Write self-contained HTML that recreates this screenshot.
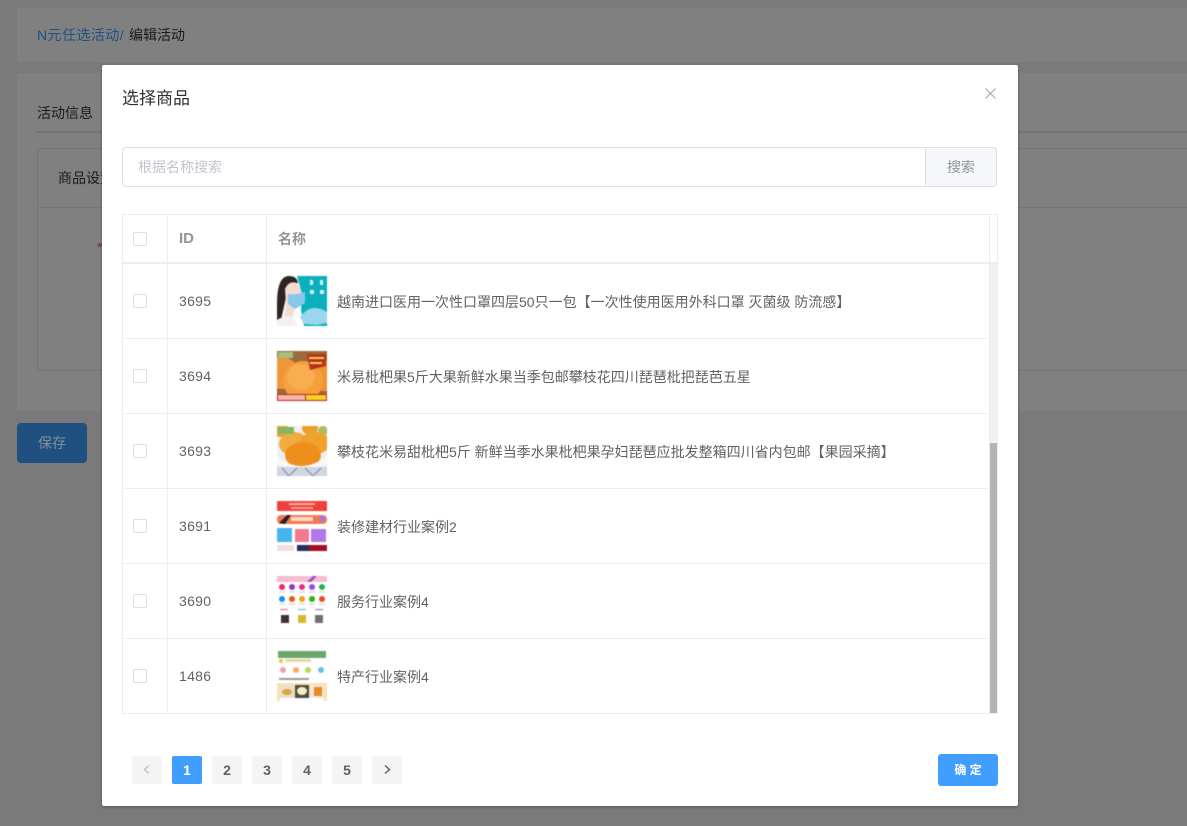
<!DOCTYPE html>
<html lang="zh"><head><meta charset="utf-8"><title>选择商品</title>
<style>
*{box-sizing:border-box}
html,body{margin:0;padding:0;width:1187px;height:826px;overflow:hidden;background:#7a7a7a}
body{position:relative;font-family:"Liberation Sans","Noto Sans CJK SC",sans-serif;font-size:14px;color:#606266}
.a{position:absolute}
.t{position:absolute;white-space:nowrap;line-height:20px}
.cb{position:absolute;left:133px;width:14px;height:14px;border:1px solid #dcdfe6;border-radius:2px;background:#fff}
.hl{position:absolute;left:123px;width:866px;height:1px;background:#ebeef5}
.id{position:absolute;left:179px;line-height:20px;color:#606266;letter-spacing:.3px}
.nm{position:absolute;left:337px;line-height:20px;white-space:nowrap;color:#606266}
.im{position:absolute;left:277px;width:50px;height:50px;display:block;filter:blur(.45px)}
.pg{position:absolute;top:756px;width:30px;height:28px;background:#f4f4f5;border-radius:2px;text-align:center;line-height:28px;font-size:14px;font-weight:700;color:#606266}
</style></head><body>
<div class="a" style="left:17px;top:8px;width:1170px;height:54px;background:#808080"></div>
<div class="a" style="left:17px;top:73px;width:1170px;height:338px;background:#808080"></div>
<div class="t" style="left:37px;top:25px;font-size:14px;letter-spacing:.45px;color:#1f4f86">N元任选活动/</div>
<div class="t" style="left:129px;top:25px;font-size:14px;color:#1a1a1a">编辑活动</div>
<div class="t" style="left:37px;top:103px;font-size:14px;color:#1a1a1a">活动信息</div>
<div class="a" style="left:37px;top:131px;width:1150px;height:2px;background:#72727a"></div>
<div class="a" style="left:37px;top:148px;width:1150px;height:223px;border:1px solid #757575;border-right:0;border-radius:4px 0 0 4px"></div>
<div class="a" style="left:38px;top:207px;width:1149px;height:1px;background:#757575"></div>
<div class="t" style="left:58px;top:168px;color:#1a1a1a">商品设置</div>
<div class="t" style="left:97px;top:237px;color:#7a2a2a">*</div>
<div class="a" style="left:17px;top:423px;width:70px;height:40px;background:#20507f;border-radius:4px;color:#7f8f9f;text-align:center;line-height:40px;font-size:14px">保存</div>

<div class="a" style="left:102px;top:65px;width:916px;height:741px;background:#fff;border-radius:2px;box-shadow:0 1px 3px rgba(0,0,0,.3)"></div>
<div class="t" style="left:122px;top:88px;font-size:17px;line-height:21px;color:#303133">选择商品</div>
<svg class="a" style="left:985px;top:88px" width="11" height="11" viewBox="0 0 11 11"><path d="M.5 .5L10.500 10.500M10.500 .5L.5 10.500" stroke="#a0a3a9" stroke-width="1" fill="none"/></svg>

<div class="a" style="left:122px;top:147px;width:875px;height:40px;border:1px solid #dcdfe6;border-radius:4px;background:#fff"></div>
<div class="a" style="left:925px;top:147px;width:72px;height:40px;border:1px solid #dcdfe6;border-radius:0 4px 4px 0;background:#f5f7fa;color:#909399;text-align:center;line-height:38px">搜索</div>
<div class="t" style="left:138px;top:157px;color:#c0c4cc">根据名称搜索</div>

<div class="a" style="left:122px;top:214px;width:876px;height:500px;border:1px solid #ebeef5"></div>
<div class="a" style="left:167px;top:215px;width:1px;height:498px;background:#ebeef5"></div>
<div class="a" style="left:266px;top:215px;width:1px;height:498px;background:#ebeef5"></div>
<div class="a" style="left:989px;top:215px;width:1px;height:498px;background:#ebeef5"></div>
<div class="a" style="left:123px;top:262px;width:874px;height:2px;background:#ebeef5"></div>
<div class="a" style="left:990px;top:264px;width:7px;height:179px;background:#f1f1f1"></div>
<div class="a" style="left:990px;top:443px;width:7px;height:270px;background:#b3b3b3"></div>
<div class="hl" style="top:338px"></div><div class="hl" style="top:413px"></div><div class="hl" style="top:488px"></div><div class="hl" style="top:563px"></div><div class="hl" style="top:638px"></div>

<div class="cb" style="top:232px"></div>
<div class="t" style="left:179px;top:229px;font-weight:700;font-size:15px;color:#909399">ID</div>
<div class="t" style="left:278px;top:229px;font-weight:700;color:#909399;font-size:14px">名称</div>

<div class="cb" style="top:294px"></div><div class="id" style="top:291px">3695</div>
<div class="cb" style="top:369px"></div><div class="id" style="top:366px">3694</div>
<div class="cb" style="top:444px"></div><div class="id" style="top:441px">3693</div>
<div class="cb" style="top:519px"></div><div class="id" style="top:516px">3691</div>
<div class="cb" style="top:594px"></div><div class="id" style="top:591px">3690</div>
<div class="cb" style="top:669px"></div><div class="id" style="top:666px">1486</div>

<div class="nm" style="top:292px">越南进口医用一次性口罩四层50只一包【一次性使用医用外科口罩 灭菌级 防流感】</div>
<div class="nm" style="top:367px">米易枇杷果5斤大果新鲜水果当季包邮攀枝花四川琵琶枇把琵芭五星</div>
<div class="nm" style="top:442px">攀枝花米易甜枇杷5斤 新鲜当季水果枇杷果孕妇琵琶应批发整箱四川省内包邮【果园采摘】</div>
<div class="nm" style="top:517px">装修建材行业案例2</div>
<div class="nm" style="top:592px">服务行业案例4</div>
<div class="nm" style="top:667px">特产行业案例4</div>

<svg class="im" style="top:276px" viewBox="0 0 50 50"><rect width="50" height="50" fill="#fff"/><path d="M20 0H50V50H27L24 34L25 18Z" fill="#0bb0bd"/><path d="M0 28Q0 0 12 0Q20 0 21 7L11 10L8 26L4 44H0Z" fill="#2e2422"/><path d="M8 13Q12 4 20 7Q24 12 24 18L18 30L16 41H7L9 28Z" fill="#f5dccf"/><path d="M11 18Q18 19 28 16L28 27L18 33L11 28Z" fill="#86c8ea"/><path d="M0 50V44Q6 40 14 40L22 50Z" fill="#f4f2f0"/><path d="M23 41Q30 32 37 32Q44 32 50 36V47L40 49L27 48Z" fill="#9bd5f0"/><rect x="33" y="4" width="3" height="5" fill="#d8f2f4"/><rect x="43" y="4" width="3" height="5" fill="#d8f2f4"/><rect x="33" y="14" width="4" height="4" fill="#d8f2f4"/><rect x="43" y="14" width="4" height="4" fill="#d8f2f4"/></svg>

<svg class="im" style="top:351px" viewBox="0 0 50 50"><rect width="50" height="50" fill="#9c6a38"/><circle cx="5" cy="22" r="16" fill="#f0963a"/><circle cx="47" cy="25" r="15" fill="#f09434"/><ellipse cx="26" cy="30" rx="20" ry="20" fill="#f5a03c"/><ellipse cx="24" cy="26" rx="14" ry="13" fill="#f7ad50"/><rect x="1" y="1" width="15" height="6" fill="#a3c07a"/><path d="M30 3H49V15L33 19Z" fill="#b8321e"/><rect x="32" y="6" width="15" height="2" fill="#f2d24a"/><rect x="33" y="11" width="12" height="2" fill="#f2d24a"/><rect y="43" width="50" height="7" fill="#c8202a"/><rect x="1" y="44" width="27" height="5" fill="#f2b8a8"/><rect x="29" y="44" width="20" height="5" fill="#f6d420"/></svg>

<svg class="im" style="top:426px" viewBox="0 0 50 50"><rect width="50" height="50" fill="#eef0f3"/><circle cx="3" cy="3" r="8" fill="#f2a030"/><ellipse cx="33" cy="2" rx="8" ry="7" fill="#ee9f28"/><circle cx="46" cy="5" r="5" fill="#a8c060"/><ellipse cx="17" cy="18" rx="15" ry="12" fill="#f2ab40"/><ellipse cx="38" cy="17" rx="15" ry="11" fill="#f0a22e"/><ellipse cx="26" cy="29" rx="18" ry="13" fill="#ee8f1c"/><path d="M0 30Q24 50 50 30V38Q26 46 0 38Z" fill="#f8f8f8"/><rect x="1" y="1" width="16" height="7" fill="#82b860"/><rect y="41" width="50" height="9" fill="#d0d6e0"/><path d="M5 42L12 50M20 42L12 50M28 42L36 50M44 42L36 50" stroke="#7a8aa0" stroke-width="1"/></svg>

<svg class="im" style="top:501px" viewBox="0 0 50 50"><rect width="50" height="50" fill="#fff"/><rect width="50" height="10" fill="#f0403c"/><rect x="12" y="2" width="26" height="2" fill="#f7b0a0"/><rect x="14" y="6" width="22" height="2" fill="#f49888"/><rect y="14" width="50" height="9" rx="4" fill="#f37a50"/><rect x="14" y="16" width="22" height="4" fill="#f8d8c8"/><path d="M2 22L10 14H14L8 23Z" fill="#222"/><circle cx="45" cy="18" r="3" fill="#9a78e0"/><rect y="27" width="15" height="14" fill="#46b4f0"/><rect x="18" y="28" width="14" height="13" fill="#f27a90"/><rect x="34" y="28" width="15" height="13" fill="#b078e8"/><rect y="44" width="17" height="6" fill="#f2e0e0"/><rect x="20" y="44" width="30" height="6" fill="#a01020"/><rect x="20" y="44" width="12" height="6" fill="#203060"/></svg>

<svg class="im" style="top:576px" viewBox="0 0 50 50"><rect width="50" height="50" fill="#fff"/><rect width="50" height="6" fill="#f4bdd0"/><path d="M30 6L36 0H40L34 6Z" fill="#a050c0"/><circle cx="5" cy="11" r="3" fill="#ee2a6a"/><circle cx="15" cy="11" r="3" fill="#8a3ac8"/><circle cx="25" cy="11" r="3" fill="#ee2a8a"/><circle cx="35" cy="11" r="3" fill="#a048e0"/><circle cx="45" cy="11" r="3" fill="#28b050"/><circle cx="5" cy="23" r="3" fill="#1a90e8"/><circle cx="15" cy="23" r="3" fill="#e85a18"/><circle cx="25" cy="23" r="3" fill="#f5a010"/><circle cx="35" cy="23" r="3" fill="#30b020"/><circle cx="45" cy="23" r="3" fill="#e84a28"/><path d="M2 16H8M12 16H18M22 16H28M32 16H38M42 16H48M2 28H8M12 28H18M22 28H28M32 28H38M42 28H48" stroke="#ccc" stroke-width="1"/><rect x="3" y="33" width="8" height="1" fill="#e06080"/><rect x="21" y="33" width="8" height="1" fill="#60b0d0"/><rect x="38" y="33" width="8" height="1" fill="#a060d0"/><rect x="4" y="39" width="8" height="8" fill="#40303a"/><rect x="21" y="39" width="8" height="8" fill="#d8b830"/><rect x="38" y="39" width="8" height="8" fill="#707070"/></svg>

<svg class="im" style="top:651px" viewBox="0 0 50 50"><rect width="50" height="50" fill="#fff"/><rect x="1" width="48" height="7" fill="#6aa86a"/><circle cx="4" cy="10" r="2" fill="#f2c040"/><rect x="8" y="8" width="26" height="3" fill="#e8d8a8"/><circle cx="6" cy="19" r="3" fill="#f2a0b0"/><circle cx="19" cy="19" r="3" fill="#f5b060"/><circle cx="31" cy="19" r="3" fill="#b8d860"/><circle cx="44" cy="19" r="3" fill="#60c0f0"/><rect x="2" y="27" width="30" height="2" fill="#999"/><rect y="32" width="50" height="18" fill="#fbe2b0"/><rect x="3" y="34" width="14" height="13" fill="#e8e0d0"/><ellipse cx="10" cy="41" rx="5" ry="3" fill="#d8a830"/><rect x="18" y="34" width="14" height="13" fill="#504a40"/><ellipse cx="25" cy="40" rx="5" ry="4" fill="#f0eec8"/><rect x="33" y="34" width="14" height="13" fill="#f0e8d8"/><rect x="37" y="36" width="8" height="9" fill="#e88820"/><rect x="3" y="47" width="44" height="3" fill="#fff"/></svg>

<div class="pg" style="left:132px;color:#c0c4cc"><svg width="30" height="28" viewBox="0 0 30 28" style="display:block"><path d="M17 9.500L12.500 13.500L17 17.500" stroke="#c0c4cc" stroke-width="1.500" fill="none"/></svg></div>
<div class="pg" style="left:172px;background:#409eff;color:#fff">1</div>
<div class="pg" style="left:212px">2</div>
<div class="pg" style="left:252px">3</div>
<div class="pg" style="left:292px">4</div>
<div class="pg" style="left:332px">5</div>
<div class="pg" style="left:372px"><svg width="30" height="28" viewBox="0 0 30 28" style="display:block"><path d="M13 9.500L17.500 13.500L13 17.500" stroke="#606266" stroke-width="1.500" fill="none"/></svg></div>
<div class="a" style="left:938px;top:754px;width:60px;height:32px;background:#409eff;border-radius:3px;color:#fff;text-align:center;line-height:32px;font-size:12px;font-weight:700">确 定</div>
</body></html>
